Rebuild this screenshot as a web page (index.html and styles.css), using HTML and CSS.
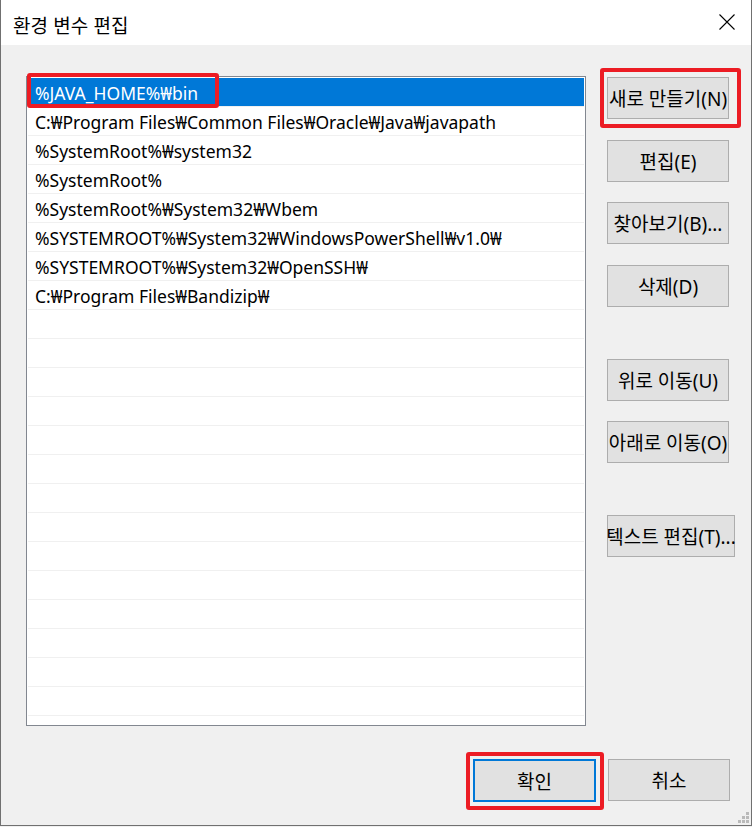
FILE: index.html
```html
<!DOCTYPE html>
<html lang="ko">
<head>
<meta charset="utf-8">
<title>환경 변수 편집</title>
<link rel="stylesheet" href="styles.css">
</head>
<body>
<div class="window">
  <div class="titlebar">
    <span class="title">환경 변수 편집</span>
    <svg class="close" width="16" height="16" viewBox="0 0 16 16"><path d="M0.5 0.5 L15.5 15.5 M15.5 0.5 L0.5 15.5" stroke="#000" stroke-width="1.1" fill="none"/></svg>
  </div>
  <div class="content">
    <div class="main">
      <div class="list">
        <div class="row selected">%JAVA_HOME%₩bin</div>
        <div class="row">C:₩Program Files₩Common Files₩Oracle₩Java₩javapath</div>
        <div class="row">%SystemRoot%₩system32</div>
        <div class="row">%SystemRoot%</div>
        <div class="row">%SystemRoot%₩System32₩Wbem</div>
        <div class="row">%SYSTEMROOT%₩System32₩WindowsPowerShell₩v1.0₩</div>
        <div class="row">%SYSTEMROOT%₩System32₩OpenSSH₩</div>
        <div class="row">C:₩Program Files₩Bandizip₩</div>
        <div class="row"></div><div class="row"></div><div class="row"></div><div class="row"></div>
        <div class="row"></div><div class="row"></div><div class="row"></div><div class="row"></div>
        <div class="row"></div><div class="row"></div><div class="row"></div><div class="row"></div>
        <div class="row"></div><div class="row"></div>
      </div>
      <div class="side">
        <button class="btn b-new">새로 만들기(N)</button>
        <button class="btn b-gap">편집(E)</button>
        <button class="btn b-gap2">찾아보기(B)...</button>
        <button class="btn b-gap">삭제(D)</button>
        <button class="btn b-big">위로 이동(U)</button>
        <button class="btn b-gap2">아래로 이동(O)</button>
        <button class="btn b-big b-wide">텍스트 편집(T)...</button>
      </div>
    </div>
    <div class="footer">
      <button class="btn btn-ok">확인</button>
      <button class="btn">취소</button>
    </div>
  </div>
  <div class="mark mark-row"></div>
  <div class="mark mark-new"></div>
  <div class="mark mark-ok"></div>
  <svg class="grip" width="12" height="12" viewBox="0 0 12 12">
    <rect x="8" y="0" width="3" height="3" fill="#b9b9b9"/>
    <rect x="4" y="4" width="3" height="3" fill="#b9b9b9"/>
    <rect x="8" y="4" width="3" height="3" fill="#b9b9b9"/>
    <rect x="0" y="8" width="3" height="3" fill="#b9b9b9"/>
    <rect x="4" y="8" width="3" height="3" fill="#b9b9b9"/>
    <rect x="8" y="8" width="3" height="3" fill="#b9b9b9"/>
  </svg>
</div>
</body>
</html>
```
FILE: styles.css
```css
* { box-sizing: border-box; }
html, body { margin: 0; padding: 0; background: #f0f0f0; }
body {
  font-family: "Noto Sans", "Noto Sans CJK KR", sans-serif;
  color: #000;
}
.window {
  position: relative;
  width: 752px;
  height: 826px;
  background: #f0f0f0;
  border-left: 1px solid #707070;
  border-right: 1px solid #707070;
  border-bottom: 1px solid #707070;
  overflow: hidden;
}
.titlebar {
  height: 45px;
  background: #fff;
  display: flex;
  align-items: center;
  justify-content: space-between;
  padding-left: 12px;
  padding-right: 16px;
}
.title {
  font-family: "Noto Sans CJK KR", sans-serif;
  font-size: 19px;
  line-height: 24px;
  padding-top: 4px;
}
.close { display: block; margin-top: -2px; }
.content {
  padding: 31px 21px 0 25px;
}
.main {
  display: flex;
  align-items: flex-start;
}
.list {
  flex: 0 0 560px;
  width: 560px;
  height: 650px;
  background: #fff;
  border: 1px solid #828790;
  padding: 1px;
  overflow: hidden;
}
.row {
  height: 29px;
  border-bottom: 1px solid #f0f0f0;
  padding: 2px 0 0 7px;
  font-size: 17.5px;
  line-height: 26px;
  white-space: nowrap;
}
.row.selected {
  background: #0078d7;
  color: #fff;
}
.side {
  flex: 0 0 auto;
  display: flex;
  flex-direction: column;
  align-items: flex-start;
  margin-left: 21px;
  margin-top: 1px;
}
.btn {
  flex: 0 0 auto;
  width: 122px;
  height: 42px;
  background: #e1e1e1;
  border: 1px solid #adadad;
  border-radius: 0;
  padding: 0;
  font-family: "Noto Sans", "Noto Sans CJK KR", sans-serif;
  font-size: 19px;
  color: #000;
  white-space: nowrap;
  display: flex;
  align-items: center;
  justify-content: center;
  overflow: visible;
}
.b-gap { margin-top: 21px; }
.b-gap2 { margin-top: 20px; }
.b-big { margin-top: 52px; }
.b-wide { width: 128px; }
.footer {
  display: flex;
  justify-content: flex-end;
  gap: 12px;
  margin-top: 33px;
}
.btn-ok {
  width: 123px;
  height: 43px;
  border: 2px solid #0078d7;
}
.mark {
  position: absolute;
  border: 4px solid #ec1c24;
  border-radius: 3px;
}
.mark-row { left: 26px; top: 73px; width: 192px; height: 35px; }
.mark-new { left: 599px; top: 68px; width: 141px; height: 60px; }
.mark-ok { left: 465px; top: 752px; width: 138px; height: 58px; }
.grip { position: absolute; right: 1px; bottom: 1px; }
```
